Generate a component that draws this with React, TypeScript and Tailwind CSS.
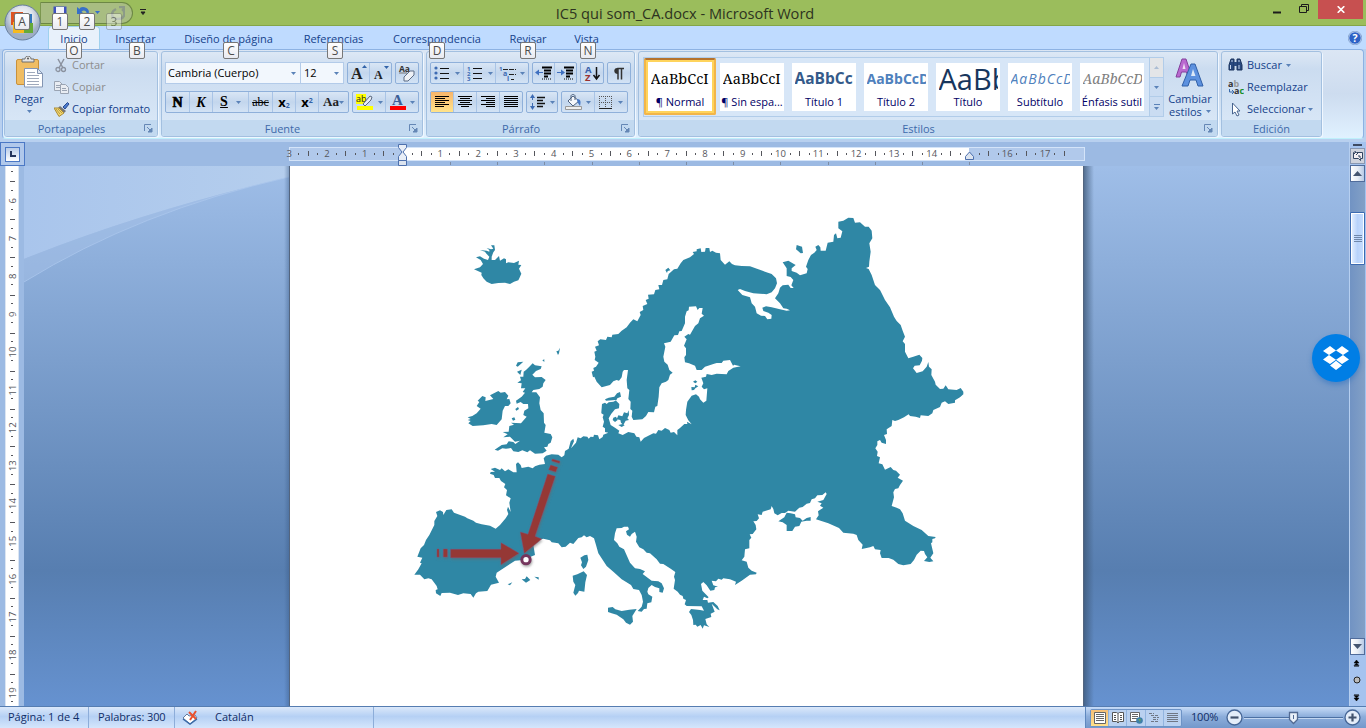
import type { ReactNode } from "react";

const Svg = ({ w, h, children, className = "" }: { w: number; h: number; children: ReactNode; className?: string }) => (
  <svg width={w} height={h} viewBox={`0 0 ${w} ${h}`} className={`block shrink-0 ${className}`}>{children}</svg>
);

const Caret = ({ className = "" }: { className?: string }) => (
  <Svg w={5} h={3} className={className}><path d="M0 0h5L2.5 3z" fill="#5a82b8" /></Svg>
);

const Launcher = () => (
  <Svg w={9} h={9}>
    <path d="M.5 7V.5H7" stroke="#6587b5" fill="none" />
    <path d="M3 3l3 3M8 4v4H4z" stroke="#6587b5" fill="#6587b5" />
  </Svg>
);

const KeyTip = ({ children, className }: { children: ReactNode; className: string }) => (
  <span className={`absolute z-20 flex h-[17px] w-4 items-center justify-center rounded-[2px] border border-[#777] bg-linear-to-b from-white to-[#e9eaf0] text-[12px] leading-none text-[#4c4c4c] ${className}`}>
    {children}
  </span>
);

const Group = ({ label, width, launcher, children }: { label: string; width: string; launcher?: boolean; children: ReactNode }) => (
  <section className={`flex h-[86px] shrink-0 flex-col overflow-hidden rounded-[3px] border border-[#a3c0e0] bg-linear-to-b from-[#dde8f5] via-[#cbdcf0] via-20% to-[#dbe9f8] shadow-[1px_1px_0_#f0f7ff] ${width}`}>
    <div className="flex h-[68px] shrink-0">{children}</div>
    <div className="flex h-4 items-center bg-[#c2d9f0] pr-1 text-[11px] text-[#3e6aaa]">
      <span className={`flex-1 text-center leading-none ${launcher ? "pr-[6px]" : "pl-1"}`}>{label}</span>
      {launcher && <Launcher />}
    </div>
  </section>
);

const Bar = ({ width, children }: { width: string; children: ReactNode }) => (
  <div className={`flex h-[22px] shrink-0 divide-x divide-[#a9c4e6] rounded-[2px] border border-[#8fb0da] bg-linear-to-b from-[#d9e6f5] via-[#c3d6ed] via-50% to-[#d3e3f5] ${width}`}>
    {children}
  </div>
);

const Cell = ({ children, className = "flex-1" }: { children: ReactNode; className?: string }) => (
  <div className={`flex h-full items-center justify-center gap-1 ${className}`}>{children}</div>
);

const TextLines = ({ rows }: { rows: number[][] }) => (
  <Svg w={14} h={12}>
    {rows.map(([x, w], i) => <rect key={i} x={x} y={i * 2} width={w} height={1} fill="#000" />)}
  </Svg>
);

const ListIcon = ({ kind }: { kind: "bullet" | "number" | "level" }) => (
  <Svg w={17} h={15}>
    {kind === "bullet" && [2, 7, 12].map((y) => <g key={y}><circle cx="2" cy={y} r="1.6" fill="#3d6bb3" /><path d={`M6 ${y + 0.5}h9`} stroke="#111" /></g>)}
    {kind === "number" && [2, 7, 12].map((y, i) => <g key={y}><text x="0" y={y + 2.5} fontSize="6" fontWeight="bold" fill="#3d6bb3">{i + 1}</text><path d={`M6 ${y + 0.5}h9`} stroke="#111" /></g>)}
    {kind === "level" && <><text x="0" y="5" fontSize="6" fontWeight="bold" fill="#3d6bb3">1</text><text x="4" y="10" fontSize="7" fontWeight="bold" fill="#3d6bb3">a</text><text x="8" y="15" fontSize="7" fontWeight="bold" fill="#3d6bb3">i</text><path d="M4 3.500h13M10 8.500h7M12 13.500h3" stroke="#222" strokeDasharray="5 1" /></>}
  </Svg>
);

const IndentIcon = ({ flip }: { flip?: boolean }) => (
  <Svg w={17} h={14}>
    <path d="M7 1.500h10M9 4.500h7M9 7.500h7M9 10.500h4" stroke="#000" strokeWidth="1.800" />
    <path d="M7 13h9" stroke="#000" strokeDasharray="1 1" />
    <path d={flip ? "M0 6h4V3.5L8 6.5 4 9.5V7H0z" : "M8 6H4V3.5L0 6.5 4 9.5V7h4z"} fill="#3e6fc0" />
  </Svg>
);

const PasteIcon = () => (
  <Svg w={28} h={32}>
    <rect x="1.5" y="3.5" width="22" height="25" rx="1.5" fill="#f0bd63" stroke="#c9913b" />
    <path d="M7 6V3h3c0-4 6-4 6 0h3v3z" fill="#e4e4e4" stroke="#6f6f6f" />
    <circle cx="13" cy="2.5" r="1" fill="#555" />
    <path d="M9.500 12.500h13l5 5v13.500h-18z" fill="#fff" stroke="#8395b3" />
    <path d="M22.500 12.500v5h5z" fill="#dfe7f3" stroke="#8395b3" />
    <path d="M12 16.500h8M12 19.500h12M12 22.500h12M12 25.500h12M12 28.500h12" stroke="#9fa9bb" />
  </Svg>
);

const CutIcon = () => (
  <Svg w={15} h={15}>
    <path d="M4 1l5 9M10 1L5 10" stroke="#8b929f" strokeWidth="1.5" fill="none" />
    <circle cx="4" cy="11.500" r="2" fill="none" stroke="#8b929f" strokeWidth="1.300" /><circle cx="9.500" cy="11.500" r="2" fill="none" stroke="#8b929f" strokeWidth="1.300" />
  </Svg>
);
const CopyIcon = () => (
  <Svg w={15} h={13}>
    <path d="M.5.5h5l3 3v6h-8z" fill="#e9edf3" stroke="#9aa4b3" /><path d="M2 4.500h4M2 6.500h4" stroke="#9aa4b3" />
    <path d="M6.500 3.500h5l3 3v6h-8z" fill="#e9edf3" stroke="#9aa4b3" /><path d="M8 7.500h4M8 9.500h5" stroke="#9aa4b3" />
  </Svg>
);
const BrushIcon = () => (
  <Svg w={16} h={15}>
    <path d="M9 5l4.500-4.500L15 2l-4 5z" fill="#4b7cd0" stroke="#294b90" />
    <path d="M6 4l6 5-2 2-6-5z" fill="#777" />
    <path d="M0 6l5 0 5 5-5 3.500z" fill="#f3d66c" stroke="#a98a35" />
    <path d="M2 7l4 5M4 7l4 4" stroke="#b79b45" />
  </Svg>
);

const seg = (dx: number, dy: number, points: string) =>
  points.trim().split(/\s+/).map((p) => {
    const [x, y] = p.split(",").map(Number);
    return `${x + dx},${y + dy}`;
  }).join(" ");

const mainland = [
  seg(0, 0, "605,562 590,545 583,530 579,532 575,515 582,512 580,504 588,500 596,488 584,480 586,470 583,455 590,452 585,440 597,436 593,424 601,418 618,420 622,410 635,412 637,404 655,402 665,392 680,382 690,368 700,358 712,364 722,345 719,336 730,330 728,318 742,312 737,300 746,296 744,284 762,283 766,270 778,268 775,255 786,255 790,240 802,238 806,222 822,208 832,206 842,190 850,180 870,172 882,162 878,156 890,154"),
  seg(840, 0, "50,148 62,145 64,156 75,155 77,144 88,144 90,156 97,152 108,158 120,160 122,180 135,194 148,184 156,192 165,196 185,198 210,199 235,208 255,215 275,222 288,235 291,250 285,265 275,277 260,283 240,281 220,280 195,273 180,267 173,270 187,285 210,292 215,310 225,320 230,340 243,347 255,348 262,358 274,356 275,345 265,338 250,333 247,323 258,319 275,322 300,328 320,332 330,331 320,326 310,325 300,310 285,295 295,280 300,263 308,256 325,254 332,264 341,264 334,256 340,240 332,231 320,228 320,205 308,187 325,182 347,195 335,205 335,213 350,218 360,226 380,220 383,207 378,200 385,180 393,165 403,158 410,150 406,140 415,135 421,142 422,152 437,152 443,128 460,125 462,105 468,100 472,115 482,113 487,94 475,85 475,65 490,62 505,53 520,54 525,68 540,67 555,80 566,80 575,92 577,115 568,130 572,155 568,185 567,200 558,204 566,207 575,225 585,255 600,270 605,280 615,300 630,322 642,350 650,363 662,375 668,392 675,410 668,424 675,432 675,455 685,475 700,470 718,464 727,474 726,482 719,496 704,497 699,505 710,519 728,514 740,500 745,486 747,500 755,508 754,525 765,545 767,554 780,567 790,566 797,556 805,568 830,570 842,564 850,575 850,583 840,592 825,601 825,608 805,612 795,604 785,608 780,621 760,630 757,640 745,648 722,646 720,654 707,650 690,648 686,643 672,652 655,660"),
  seg(840, 630, "645,33 637,30 635,48 620,58 621,72 612,75 618,90 618,102 605,98 600,90 592,94 592,105 586,115 593,125 591,138 600,142 596,160 607,163 615,179 632,171 640,180 648,182 660,194 653,203 669,212 660,225 655,235 645,237 640,247 642,262 635,288 650,293 660,298 668,310 675,332 700,348 725,360 745,378 767,381 765,385 757,387 757,397 753,400 760,430 751,443 760,454 748,456 732,453 742,442 735,432 732,423 722,422 710,434 702,450 692,462 670,466 655,462 640,449 626,444 605,444 600,430 602,420 585,418 580,408 570,412 545,417 548,404 535,390 530,375 520,371 490,368 477,354 445,340 408,328 416,316 414,304 430,293 420,287 425,280 412,275 430,270 440,252 437,247 427,255 412,256 405,265 395,268 390,279 380,281 368,291 358,293 345,305 325,302 315,309 305,309 293,316 283,310 280,297 275,288 272,298 248,305 245,315 233,313 237,325 230,333 220,334 227,345 229,358 218,372 209,373 214,383 208,390 208,415 195,418 193,440 185,451 200,455 205,473 215,482 230,488 228,493 210,494 185,512 165,525 168,515 150,508 130,505 125,509 115,506 108,514 95,512 100,526 114,530 105,532 103,540 91,542 80,526 70,516 63,522 67,542 86,562 82,565 72,560 68,570 82,570 84,578 100,576 113,588 119,601 112,598 95,581 104,605 92,611 94,621 76,627 80,643 88,651 72,646 68,656 62,645 52,650 47,644 40,645 39,630 34,615 27,606 33,597 60,600 72,602 65,589 20,588 14,583 18,570 10,566 8,558 0,554"),
  seg(0, 630, "833,545 821,536 825,510 822,500 826,486 812,476 790,462 780,461 770,448 750,430 740,428 730,418 718,412 708,395 710,380 705,365 695,372 690,380 681,374 678,364 687,358 684,350 672,350 665,354 650,355 645,370 642,390 652,400 658,410 672,418 682,440 690,458 705,475 720,477 735,484 728,492 755,512 775,514 785,520 792,535 788,548 778,546 778,535 765,531 755,525 745,534 742,545 745,553 757,560 754,577 742,580 740,596 732,597 725,605 713,603 725,590 729,575 725,555 717,540 700,537 693,525 665,508 640,485 620,468 595,430 588,405 582,385 570,378 560,382 552,376 545,382 535,384 520,402 510,398 497,410 485,412 475,400 455,397 450,391 430,386 412,391 400,405 405,435 385,443 370,450 345,452 290,488 287,500 297,518 273,524 262,543 235,545 228,550 220,563 212,552 190,550 174,555 150,548 125,549 121,558 108,550 107,540 113,538 110,528 95,508 85,505 73,508 60,494 43,494 55,478 65,460 60,458 67,443 52,440 62,415 72,405 78,390 88,375 103,345 103,333 112,318 108,306 120,301 129,306 130,315 139,300 155,298 162,308 195,320 202,325 220,332 228,338 245,343 270,347 287,356 300,345 317,325 325,312 321,300 324,290 332,306 328,278 332,265 318,256 321,240 312,232 316,222 303,213 298,204 285,204 281,195 270,191 272,186 285,185 272,177 285,173 300,180 305,175 315,184 325,178 340,187 350,187 348,162 354,157 362,165 365,174 385,170 398,175 405,169 418,164 435,162 431,145 438,137 455,133 475,134 485,142 493,136 495,123 506,116 512,94 520,86 522,94 513,115 528,98 533,82 542,85 550,79 562,80 566,86 572,80 580,81 582,74 594,76 598,88 608,81 610,74 625,68 615,66 615,55 608,50 612,35 608,22 611,14 604,10"),
  seg(0, 0, "604,637 606,612 615,608 620,612 626,607 640,605 649,601 652,595 663,590 660,576 651,580 643,590 626,593 615,598 618,602 646,600 658,612 657,625 645,628 634,641 626,655"),
  seg(0, 630, "632,45 645,53 658,62 655,70 668,75 685,66 703,70 709,80 718,82 722,95 732,84 760,70 768,71 775,60 785,62 795,54 808,60 812,68 822,66 832,76 832,60 840,54 853,42 862,42 861,35 875,43 865,31 857,15"),
  seg(840, 0, "18,630 22,605 35,587 48,583 57,590 60,598 70,608 79,602 82,565 72,568 65,560 70,550 64,533 78,530 80,522 95,525 110,521 140,523 145,513 160,503 182,499 168,496 163,494 159,497 150,480 130,482 125,489 110,489 100,492 75,500 65,510 50,510 45,497 27,490 15,487 13,472 18,465 18,445 12,437 20,418 13,410 25,402 30,404 45,378 55,370 60,355 72,347 65,341 68,324 58,324 53,330 48,319 27,320 26,331 20,334 15,350 15,370"),
  seg(0, 0, "845,393 838,394 834,405 823,406 812,425 792,430 796,440 790,470 793,485 803,494 808,510 818,518 810,524 805,540 798,545 785,550 778,562 776,590 772,618 766,620 762,637 745,636 738,648 727,658 700,660 695,650 697,632 691,627 692,605 685,597 688,570 682,565 680,540 684,510 672,510 668,515 665,532 657,542 650,540 640,544 630,555"),
].join(" ");

const islands = [
  seg(0, 0, "222,208 240,202 249,192 242,180 228,172 240,169 252,176 264,180 268,170 258,160 255,155 240,150 260,152 268,155 268,150 260,144 273,148 280,146 273,136 283,136 285,150 280,157 275,170 275,180 285,180 297,168 300,182 312,175 318,178 318,190 325,187 342,189 357,182 355,194 364,195 357,206 364,221 358,235 355,241 342,245 330,252 315,248 295,249 275,252 260,245 250,235 244,225 245,218"),
  seg(0, 0, "398,490 405,496 425,499 422,507 408,513 397,524 405,532 425,531 437,540 430,550 428,560 418,567 400,570 395,577 409,577 420,592 418,610 422,630 431,640 432,668 437,675 433,698 452,702 457,712 452,728 445,732 442,740 432,742 440,752 428,760 405,761 390,751 382,757 367,751 355,756 340,754 333,744 318,746 307,745 294,752 284,749 305,735 320,733 326,724 340,726 346,732 360,722 345,725 330,710 310,712 323,703 308,696 326,695 328,678 342,674 333,668 363,670 380,650 370,645 373,632 385,625 384,612 370,612 362,606 350,611 348,602 365,590 375,578 368,576 376,565 363,565 365,550 352,548 363,541 360,530 370,530 371,515 378,510 388,500"),
  seg(0, 0, "203,652 217,648 230,640 242,626 230,618 238,606 233,602 247,588 257,592 256,603 280,597 270,586 295,573 302,578 315,576 325,587 320,598 328,597 332,610 325,618 315,618 308,632 305,658 290,675 275,672 250,676 218,678 205,670 212,663 203,660 212,657"),
  seg(0, 0, "348,497 353,487 370,485 360,494 353,500"), seg(0, 0, "351,515 365,509 361,525"), seg(0, 0, "427,481 433,478 433,486"),
  seg(0, 0, "469,454 475,452 480,443 477,460 474,465"), seg(0, 0, "346,627 354,621 357,627 349,632"), seg(0, 0, "335,655 343,652 346,659 339,662"),
  seg(0, 0, "655,646 667,649 672,637 682,640 686,631 687,645 682,655 687,660 677,662 670,675 663,668 661,660 650,658"),
  seg(0, 0, "640,653 648,650 653,660 645,666 638,660"), seg(0, 0, "655,675 668,672 674,676 665,681"), seg(0, 0, "796,210 805,203 811,211 803,213 801,219"),
  seg(840, 0, "348,148 350,135 366,140 369,159 362,160"), seg(840, 0, "39,545 46,541 52,545 46,550"), seg(840, 0, "34,561 44,562 46,554 55,559 46,565 42,570 35,571"),
  seg(840, 630, "295,334 313,322 320,308 332,310 345,313 347,322 360,324 368,332 380,324 392,321 392,332 380,332 364,335 358,348 345,350 337,363 320,363 320,345 308,337"),
  seg(0, 630, "541,443 553,436 562,434 565,450 558,470 550,477 543,466 546,457"),
  seg(0, 630, "518,497 532,493 551,484 561,495 556,517 553,545 537,542 534,549 526,557 520,548 526,525 520,515"),
  seg(0, 630, "624,593 638,591 646,598 665,603 688,599 710,597 697,618 699,635 690,644 678,638 670,628 650,614 635,610 624,606"),
  seg(0, 630, "323,523 337,517 330,526"), seg(0, 630, "365,508 375,507 380,499 391,510 378,518"), seg(0, 630, "403,500 416,502 416,509"),
];

const EuropeMap = () => (
  <svg width="570" height="440" viewBox="0 0 1710 1320" className="block">
    <defs><filter id="soft" x="-10%" y="-10%" width="130%" height="130%"><feDropShadow dx="2" dy="5" stdDeviation="3" floodColor="#666" floodOpacity=".55" /></filter></defs>
    <g fill="#2f87a5"><polygon points={mainland} />{islands.map((p) => <polygon key={p} points={p} />)}</g>
    <g transform="translate(0 630)" fill="#953735" stroke="#8b4a72" strokeWidth="1.500" filter="url(#soft)">
      <path d="M111 417h6v24h-6zM130 417h12v24h-12zM152 418h151v-20l54 32-54 34v-21H152z" />
      <path d="M457 147l23 7-2 6-23-7zM452 165l21 7-6 14-21-7zM443 192l23 7-61 180 20 8-52 43-12-64 23 7z" />
      <circle cx="378" cy="449" r="12.500" fill="#fff" stroke="#74365d" strokeWidth="9" />
    </g>
  </svg>
);

const HRuler = () => (
  <svg width="810" height="24" viewBox="280 0 810 24" className="block" fontSize="9.500" fill="#55565c" textAnchor="middle">
    <rect x="289.500" y="5.500" width="795" height="13" fill="#b1c9eb" stroke="#d4e4f9" />
    <rect x="402" y="6" width="567" height="12" fill="#fff" />
    {Array.from({ length: 21 }, (_, i) => i - 3).map((k) => {
      const x = 402.5 + k * 37.8;
      return <g key={k}>
        {k !== 0 && k !== 15 && <text x={x} y="15">{Math.abs(k)}</text>}
        <path d={`M${Math.round(x + 18.5) + 0.5} 9v5`} stroke="#55565c" />
        <path d={`M${Math.round(x + 9) + 0.5} 11v2${k < 17 ? `M${Math.round(x + 28) + 0.5} 11v2` : ""}`} stroke="#55565c" />
      </g>;
    })}
    {Array.from({ length: 12 }, (_, i) => <path key={i} d={`M${Math.round(450 + i * 47.2) + 0.5} 20v3`} stroke="#7d8da5" />)}
    <path d="M398.500 2.500h8v3l-3.500 4.500 3.500 4.500v4h-8v-4l3.500-4.500-3.500-4.500z" fill="#e8eef7" stroke="#4d70ad" />
    <path d="M398.500 18.500h8v5h-8z" fill="#dce4ef" stroke="#4d70ad" />
    <path d="M965.500 17.500v-3l4-4.500 4 4.500v3z" fill="#dce4ef" stroke="#4d70ad" />
  </svg>
);

const VRuler = () => (
  <svg width="24" height="540" viewBox="0 166 24 540" className="block shrink-0" fontSize="9.500" fill="#55565c" textAnchor="middle">
    <rect x="0" y="166" width="24" height="540" fill="#9cbae3" /><rect x="5.500" y="165" width="13" height="542" fill="#fff" stroke="#dbe5f2" />
    {Array.from({ length: 15 }, (_, i) => i + 5).map((k) => {
      const y = 200.7 + (k - 6) * 37.85;
      return <g key={k}>
        {k > 5 && <text transform={`translate(16 ${y}) rotate(-90)`}>{k}</text>}
        <path d={`M11 ${Math.round(y + 9) - 0.5}h2M10 ${Math.round(y + 18.6) + 0.5}h5M11 ${Math.round(y + 28) - 0.5}h2`} stroke="#55565c" />
      </g>;
    })}
  </svg>
);

const styles = [
  { name: "¶ Normal", sample: "AaBbCcI", cls: "font-['Noto_Serif','Liberation_Serif',serif] text-[14.500px] text-black", on: true },
  { name: "¶ Sin espa...", sample: "AaBbCcI", cls: "font-['Noto_Serif','Liberation_Serif',serif] text-[14.500px] text-black" },
  { name: "Título 1", sample: "AaBbCc", cls: "font-bold text-[15.500px] text-[#345a8a]" },
  { name: "Título 2", sample: "AaBbCcD", cls: "font-bold text-[14px] text-[#4f81bd]" },
  { name: "Título", sample: "AaBb", cls: "text-[29px] text-[#17365d]" },
  { name: "Subtítulo", sample: "AaBbCcD", cls: "italic text-[14px] text-[#4f81bd] tracking-[1px]" },
  { name: "Énfasis sutil", sample: "AaBbCcD", cls: "font-['Noto_Serif','Liberation_Serif',serif] italic text-[14px] text-[#808080]" },
];

const tabs: [string, string][] = [
  ["Insertar", "w-[61px]"], ["Diseño de página", "w-[125px]"], ["Referencias", "ml-px w-[83px]"],
  ["Correspondencia", "w-[124px]"], ["Revisar", "w-[58px]"], ["Vista", "w-[59px]"],
];

const TitleBar = () => (
  <header className="flex h-[26px] shrink-0 border-b border-[#84a548] bg-[#9bbd5c]">
    <div className="flex h-6 w-[160px] items-start pl-10 pt-0.5">
      <div className="flex h-[22px] w-[93px] items-center gap-2.5 rounded-r-full border border-[#6c8745] border-l-[#7b974f] bg-[#a8bd82] pl-3">
        <Svg w={14} h={14}><path d="M.5.5h13v13h-13z" fill="#3e50bf" /><path d="M3 1h8v6H3z" fill="#f2f3fb" /><path d="M4 9h6v4H4z" fill="#ddd" /></Svg>
        <Svg w={24} h={14}><path d="M0 1v7h7L4.500 5.500c2-2 5-1 5 1.500s-2 4-3 5c6-1 7-8 3-10S3 1.500 2.500 3z" fill="#3770c8" /><path d="M18 5h5l-2.500 3z" fill="#3770c8" /></Svg>
        <Svg w={14} h={14}><path d="M5 3c-6 3-5 10 2 10s8-7 4-10M8 1h5v5" fill="none" stroke="#8c9a88" strokeWidth="2.500" /></Svg>
      </div>
      <Svg w={6} h={7} className="ml-[7px] mt-[7px]"><path d="M0 .5h6M1 3h4L3 5.500z" stroke="#222" strokeWidth="1" fill="#222" /></Svg>
    </div>
    <h1 className="flex-1 pl-px pt-[3px] text-center text-[14.600px] leading-5 text-[#2d3320]">IC5 qui som_CA.docx - Microsoft Word</h1>
    <div className="flex w-[157px] justify-end">
      <Svg w={9} h={14} className="mr-[17px]"><path d="M1 12.500h8" stroke="#1c1c1c" strokeWidth="2" /></Svg>
      <Svg w={12} h={16} className="mr-2"><path d="M1.500 6.500h7v6h-7zM3.500 6V4.500h7v6H9" fill="none" stroke="#1c1c1c" /></Svg>
      <div className="flex h-[19px] w-[45px] items-center justify-center bg-[#c75050]"><Svg w={8} h={7}><path d="M.7.2l6.600 6.600M7.300.2L.7 6.800" stroke="#fff" strokeWidth="1.600" /></Svg></div>
      <div className="w-[3px]" />
    </div>
  </header>
);

const Ribbon = () => (
  <div className="flex h-[90px] gap-[3px] rounded-[4px] border border-[#8db2e3] border-b-[#bff0fb] bg-linear-to-b from-[#dbe6f4] via-[#cddcef] via-50% to-[#e0f1ff] pl-px pt-px">
    <Group label="Portapapeles" width="w-[154px]" launcher>
      <div className="flex w-[48px] flex-col items-center pt-1 text-[11px] text-[#15428b]">
        <PasteIcon /><span className="mt-[5px] leading-none">Pegar</span><Caret className="mt-1.5" />
      </div>
      <div className="flex flex-col pl-px pt-0.5 text-[11px] text-[#15428b]">
        <div className="flex h-[22px] items-center gap-[3px] text-[#8d8d8d]"><CutIcon />Cortar</div>
        <div className="flex h-[22px] items-center gap-[3px] text-[#8d8d8d]"><CopyIcon />Copiar</div>
        <div className="flex h-[22px] items-center gap-0.5 whitespace-nowrap"><BrushIcon />Copiar formato</div>
      </div>
    </Group>
    <Group label="Fuente" width="w-[262px]" launcher>
      <div className="flex flex-col gap-[7px] pl-[3px] pt-[10px]">
        <div className="flex h-[22px]">
          <div className="flex w-[136px] items-center justify-between border border-[#b3cbe9] bg-[#f2f7fd] pl-0.5 pr-1 text-[11px] text-black">Cambria (Cuerpo)<Caret /></div>
          <div className="flex w-[43px] items-center justify-between border border-l-0 border-[#b3cbe9] bg-[#f2f7fd] pl-[3px] pr-1 text-[11px] text-black">12<Caret /></div>
          <div className="w-[3px]" />
          <Bar width="w-[45px]">
            <Cell><Svg w={16} h={18}><text x="0" y="15" fontSize="16" fontWeight="bold" fontFamily="Liberation Serif, serif" fill="#222">A</text><path d="M11 4l2.500-3L16 4z" fill="#3263a8" /></Svg></Cell>
            <Cell><Svg w={16} h={18}><text x="1" y="15" fontSize="12" fontWeight="bold" fontFamily="Liberation Serif, serif" fill="#222">A</text><path d="M11 2h5l-2.500 3z" fill="#3263a8" /></Svg></Cell>
          </Bar>
          <div className="w-[3px]" />
          <Bar width="w-[24px]"><Cell><Svg w={18} h={18}><text x="1" y="8" fontSize="8.500" fontWeight="bold" fill="#333">Aa</text><path d="M1 9h8" stroke="#777" /><path d="M6 13l6-6h4v4l-6 6H6z" fill="#eef1f6" stroke="#5d6c85" /></Svg></Cell></Bar>
        </div>
        <div className="flex h-[22px] gap-[3px]">
          <Bar width="w-[184px]">
            <Cell className="w-[24px]"><b className="font-['Liberation_Serif',serif] text-[14px] font-black text-black [-webkit-text-stroke:0.7px_black]">N</b></Cell>
            <Cell className="w-[23px]"><b className="font-['Liberation_Serif',serif] text-[14px] italic text-black">K</b></Cell>
            <Cell className="w-[36px]"><b className="font-['Liberation_Serif',serif] text-[14px] leading-none text-black underline">S</b><Caret className="ml-1" /></Cell>
            <Cell className="w-[24px]"><b className="font-['Liberation_Serif',serif] text-[12px] font-normal text-black line-through">abc</b></Cell>
            <Cell className="w-[23px]"><span className="text-[13px] font-bold leading-none text-black">x<sub className="text-[7px] text-[#3263a8]">2</sub></span></Cell>
            <Cell className="w-[23px]"><span className="text-[13px] font-bold leading-none text-black">x<sup className="text-[7px] text-[#3263a8]">2</sup></span></Cell>
            <Cell className="w-[29px]"><b className="-mr-1 font-['Liberation_Serif',serif] text-[13px] text-[#222]">Aa</b><Caret /></Cell>
          </Bar>
          <Bar width="w-[67px]">
            <Cell><Svg w={18} h={18}><rect x="0" y="1" width="10" height="10" fill="#ff0" /><text x="0" y="9" fontSize="9" fill="#222">ab</text><path d="M7 11l7-8 2 1-1 3-6 6z" fill="#e8ecf4" stroke="#5c6a7f" /><rect x="1" y="13" width="16" height="4" fill="#ff0" /></Svg><Caret /></Cell>
            <Cell><Svg w={17} h={18}><text x="3" y="12" fontSize="15" fontWeight="bold" fontFamily="Liberation Serif, serif" fill="#3b5e96">A</text><rect x="1" y="13" width="16" height="4" fill="#f00" /></Svg><Caret /></Cell>
          </Bar>
        </div>
      </div>
    </Group>
    <Group label="Párrafo" width="w-[209px]" launcher>
      <div className="flex flex-col gap-[7px] pl-[3px] pt-[10px]">
        <div className="flex h-[22px] gap-[3px]">
          <Bar width="w-[99px]">
            {(["bullet", "number", "level"] as const).map((k) => <Cell key={k}><ListIcon kind={k} /><Caret /></Cell>)}
          </Bar>
          <Bar width="w-[45px]"><Cell><IndentIcon /></Cell><Cell><IndentIcon flip /></Cell></Bar>
          <Bar width="w-[24px]"><Cell><Svg w={17} h={18}><text x="1" y="8.500" fontSize="9.500" fontWeight="bold" fill="#3a5fa8">A</text><text x="1" y="17" fontSize="9.500" fontWeight="bold" fill="#9b3131">Z</text><path d="M12.500 3v11M9.500 11l3 4 3-4" stroke="#111" strokeWidth="1.500" fill="none" /></Svg></Cell></Bar>
          <Bar width="w-[24px]"><Cell><Svg w={12} h={13}><path d="M5 12.500V1.500h6M8.500 12.500V1.500" stroke="#333" strokeWidth="1.500" fill="none" /><path d="M5 1C0 0 0 7 5 7z" fill="#333" /></Svg></Cell></Bar>
        </div>
        <div className="flex h-[22px] gap-[3px]">
          <Bar width="w-[93px]">
            <Cell className="flex-1 bg-linear-to-b from-[#f7b56b] to-[#ffe38a]"><TextLines rows={[[0, 14], [0, 10], [0, 14], [0, 10], [0, 14], [0, 9]]} /></Cell>
            <Cell><TextLines rows={[[0, 14], [2, 10], [0, 14], [2, 10], [0, 14], [3, 8]]} /></Cell>
            <Cell><TextLines rows={[[0, 14], [5, 9], [0, 14], [5, 9], [0, 14], [5, 9]]} /></Cell>
            <Cell><TextLines rows={[[0, 14], [0, 14], [0, 14], [0, 14], [0, 14], [0, 14]]} /></Cell>
          </Bar>
          <Bar width="w-[32px]"><Cell><Svg w={16} h={16}><path d="M2.500 2v12" stroke="#3d6bb3" strokeDasharray="4 3" /><path d="M0 4l2.500-4L5 4zM0 12l2.500 4L5 12z" fill="#3d6bb3" /><path d="M7 3.500h8M7 6.500h6M7 9.500h8M7 12.500h6" stroke="#111" strokeWidth="1.300" /></Svg><Caret /></Cell></Bar>
          <Bar width="w-[67px]">
            <Cell><Svg w={17} h={16}><path d="M3 7l5-5 6 5-6 5z" fill="#f5f7fa" stroke="#4f627f" /><path d="M6 7V2c0-2 4-2 4 0v4" fill="none" stroke="#4f627f" /><path d="M12 5c4 0 4 3 3 7-2-3-3-4-3-7z" fill="#4577c5" /><path d="M.5 12.500h16v3H.5z" fill="#eee" stroke="#999" /></Svg><Caret /></Cell>
            <Cell><Svg w={13} h={13}><path d="M.5 0v12M6.500 0v12M12.500 0v12M0 .5h12M0 6.500h12" stroke="#555" strokeDasharray="1 1" /><path d="M0 12.500h13" stroke="#222" /></Svg><Caret className="ml-0.5" /></Cell>
          </Bar>
        </div>
      </div>
    </Group>
    <Group label="Estilos" width="w-[580px]" launcher>
      <div className="ml-1 mt-[5px] flex h-[60px] w-[521px] border border-[#b1cce9] bg-[#d7e6f7]">
        {styles.map((s) => (
          <div key={s.name} className={s.on ? "flex h-[57px] w-[72px] shrink-0 rounded-[2px] border-2 border-[#f2b54a] border-t-[#b5722d] bg-[#ffd45c] p-[2px]" : "w-[72px] shrink-0 px-1 py-[5px]"}>
            <div className="flex h-full min-h-[48px] w-[64px] flex-col items-center overflow-hidden bg-white">
              <div className={`flex w-[59px] shrink-0 items-center overflow-hidden whitespace-nowrap leading-none ${s.on ? "h-[32px]" : "h-[31px]"} ${s.cls}`}>{s.sample}</div>
              <div className="mt-px whitespace-nowrap text-[11px] leading-[13px] text-[#000066]">{s.name}</div>
            </div>
          </div>
        ))}
        <div className="ml-auto flex w-[14px] flex-col divide-y divide-[#b1cce9] border-l border-[#b1cce9] bg-[#cadcf2]">
          <div className="flex flex-1 items-center justify-center bg-[#e3e5e8]"><Caret className="rotate-180 opacity-40" /></div>
          <div className="flex flex-1 items-center justify-center"><Caret /></div>
          <div className="flex flex-1 flex-col items-center justify-center gap-0.5"><div className="h-px w-1.5 bg-[#5a82b8]" /><Caret /></div>
        </div>
      </div>
      <div className="flex w-[52px] flex-col items-center pt-1.5 text-[11px] leading-[13px] text-[#15428b]">
        <Svg w={32} h={30}>
          <path d="M2 19L8 1h4l6 18h-4l-1.500-5h-5L6 19z" fill="#b968cf" stroke="#84409c" /><path d="M8.500 11L10 5l1.500 6z" fill="#edddf2" />
          <path d="M8 28L17 6h4l8 22h-5l-2-6h-6l-2 6z" fill="#5d91df" stroke="#3160a8" /><path d="M17 18l2-7 2.500 7z" fill="#dce8f7" />
        </Svg>
        <span className="mt-1">Cambiar</span><span className="flex items-center gap-1">estilos<Caret /></span>
      </div>
    </Group>
    <Group label="Edición" width="w-[101px]">
      <div className="flex flex-col pl-1.5 pt-0.5 text-[11px] text-[#15428b]">
        <div className="flex h-[22px] items-center gap-1"><Svg w={15} h={14}><path d="M1 12V7l2-6h3v11zM9 12V1h3l2 6v5z" fill="#29497f" stroke="#1c355f" /><path d="M6 4h3v4H6z" fill="#29497f" /><path d="M2.500 7v4M11 7v4M4 2v2M11 2v2" stroke="#c7d6ed" /></Svg>Buscar<Caret /></div>
        <div className="flex h-[22px] items-center gap-[3px]"><Svg w={16} h={16}><text x="0" y="8" fontSize="9" fontWeight="bold" fill="#333">a<tspan fill="#999">b</tspan></text><text x="6" y="15" fontSize="9" fontWeight="bold" fill="#333">a<tspan fill="#168f28">c</tspan></text><path d="M1.500 10v3h4M4 11l2 2-2 2" stroke="#3a6aa9" fill="none" /></Svg>Reemplazar</div>
        <div className="flex h-[22px] items-center gap-1"><Svg w={15} h={15}><path d="M4.500 1v11l2.500-2 2 4 2-1-2-4h3z" fill="#fff" stroke="#48648f" /></Svg>Seleccionar<Caret className="-ml-px" /></div>
      </div>
    </Group>
  </div>
);

const ScrollButton = ({ down }: { down?: boolean }) => (
  <div className="flex h-[17px] w-[15px] shrink-0 items-center justify-center border border-[#506c9b] bg-linear-to-r from-white via-[#e8edf5] to-[#b8cae6]">
    <Svg w={9} h={5} className={down ? "rotate-180" : ""}><path d="M0 5l4.500-5L9 5z" fill="#44546f" /></Svg>
  </div>
);

const Zoomer = ({ plus }: { plus?: boolean }) => (
  <Svg w={17} h={17}><circle cx="8.500" cy="8.500" r="7.500" fill="#e4edf9" stroke="#466696" strokeWidth="1.300" /><path d={plus ? "M4.500 8.500h8M8.500 4.500v8" : "M4.500 8.500h8"} stroke="#43536d" strokeWidth="2.200" /></Svg>
);

const StatusBar = () => (
  <footer className="flex h-[22px] border-t border-[#567db1] bg-linear-to-b from-[#dbe8fa] via-[#b5d0f4] via-45% to-[#d5e6fc] text-[11px] text-[#102d66]">
    <div className="flex w-[89px] items-center border-r border-[#8dadd9] pl-2">Página: 1 de 4</div>
    <div className="flex w-[86px] items-center border-r border-[#8dadd9] pl-[9px] tracking-[-0.1px]">Palabras: 300</div>
    <div className="flex w-[199px] items-center gap-[17px] border-r border-[#8dadd9] pl-[7px]">
      <Svg w={16} h={15}><path d="M1 8l4-4 2 2 6-1 2 3-7 6z" fill="#fff" stroke="#657c9e" /><path d="M1 9l7 5 7-5" stroke="#3b6ba8" fill="none" strokeWidth="1.500" /><path d="M7 2l7 7M14 1L8 10" stroke="#e9502d" strokeWidth="2" /></Svg>Catalán
    </div>
    <div className="flex-1" />
    <div className="flex w-[281px] shrink-0 items-center border-l border-[#5f88be] bg-linear-to-b from-[#c7dcf8] via-[#8daedb] via-45% to-[#7398cb] pl-1">
      <div className="flex h-[18px] w-[92px] shrink-0 divide-x divide-[#92b4df] rounded-[2px] border border-[#6d93c6] bg-[#bad1f0]">
        <Cell className="flex-1 bg-linear-to-b from-[#f6c078] to-[#ffe08a]"><Svg w={12} h={12}><path d="M.5.5h11v11H.5z" fill="#fff" stroke="#666" /><path d="M2 2.500h8M2 4.500h8M2 6.500h8M2 8.500h8" stroke="#666" /></Svg></Cell>
        <Cell><Svg w={12} h={12}><path d="M.5.500h4l1.500 1 1.500-1h4v9h-4L6 11 4.500 9.500h-4zM6 2v9M2 3.500h2M2 5.500h2M2 7.500h2M8 3.500h2M8 5.500h2M8 7.500h2" fill="#fff" stroke="#555" /></Svg></Cell>
        <Cell><Svg w={13} h={12}><path d="M.5.5h9v9h-9z" fill="#fff" stroke="#666" /><path d="M2 2.500h6M2 4.500h6M2 6.500h5" stroke="#666" /><circle cx="9.500" cy="8.500" r="3.300" fill="#3d7fa9" /><path d="M8 7l3 0-1 3z" fill="#66a15c" /></Svg></Cell>
        <Cell><Svg w={11} h={11}><path d="M0 1.500h5M2 3.500h7M4 5.500h6M4 7.500h5M2 9.500h8" stroke="#6f7785" strokeDasharray="3 1" /></Svg></Cell>
        <Cell><Svg w={11} h={11}><path d="M0 1.500h11M0 3.500h11M0 5.500h11M0 7.500h11M0 9.500h11" stroke="#6f7785" /></Svg></Cell>
      </div>
      <span className="w-[44px] pl-[9px] tracking-[-0.2px]">100%</span>
      <Zoomer />
      <Svg w={101} h={16}><path d="M1 7.500h99" stroke="#4c70a3" /><path d="M1 8.500h99" stroke="#c3d6f0" /><path d="M46.500 2.500h8v7l-4 4-4-4z" fill="#e9f0f9" stroke="#526a93" strokeWidth="1.300" /><path d="M50.500 5v4" stroke="#526a93" /></Svg>
      <Zoomer plus />
    </div>
  </footer>
);

export default function App() {
  return (
    <div className="relative flex h-[728px] w-[1366px] flex-col overflow-hidden bg-[#9cbae3] font-['Open_Sans','Noto_Sans',sans-serif]">
      <TitleBar />
      <nav className="flex h-[23px] shrink-0 bg-[#bfdbff] text-[11px] text-[#15428b]">
        <div className="ml-12 flex h-[24px] w-[52px] items-center justify-center rounded-t-[4px] border border-b-0 border-[#9fd1ee] bg-[#e8f1fb] pt-0.5">Inicio</div>
        <div className="w-[5px]" />
        {tabs.map(([t, w]) => <div key={t} className={`flex items-center justify-center whitespace-nowrap pt-[3px] ${w}`}>{t}</div>)}
        <div className="ml-auto flex items-center pr-1"><Svg w={14} h={14}><circle cx="7" cy="7" r="6.300" fill="#2d62c6" stroke="#d9e6fb" /><circle cx="7" cy="7" r="6.800" fill="none" stroke="#5579af" strokeWidth=".5" /><text x="7" y="11" fontSize="10.500" fontWeight="bold" fill="#fff" textAnchor="middle">?</text></Svg></div>
      </nav>
      <div className="h-[93px] shrink-0 bg-[#b8d0ef] pl-0.5 pr-0.5"><Ribbon /></div>
      <main className="flex h-[564px] shrink-0">
        <div className="flex w-[1349px] flex-col">
          <div className="flex h-6 bg-[#9cbae3]">
            <div className="flex w-[25px] items-center justify-center border border-[#4b78c5] bg-[#b0c8eb]"><div className="flex h-[15px] w-[15px] items-center justify-center border border-[#4b78c5] bg-linear-to-b from-[#b9cce8] to-white"><Svg w={6} h={6}><path d="M1 0v5h5" stroke="#24355d" strokeWidth="2" fill="none" /></Svg></div></div>
            <div className="w-[255px]" /><HRuler />
          </div>
          <div className="flex h-[540px]">
            <VRuler />
            <div className="flex flex-1 bg-linear-to-b from-[#9fbee8] from-0% via-[#577eb0] via-75% to-[#6692d0]">
              <div className="flex w-[265px] justify-end">
                <Svg w={265} h={540}>
                  <defs><linearGradient id="glow" x2="1" y2="0"><stop stopColor="#a9c5ec" /><stop offset="1" stopColor="#b5ceed" /></linearGradient><linearGradient id="edge"><stop stopColor="#365783" stopOpacity="0" /><stop offset="1" stopColor="#365783" stopOpacity=".4" /></linearGradient></defs>
                  <path d="M0 0h265v11Q120 45 0 93z" fill="url(#glow)" />
                  <path d="M0 93Q120 45 265 11Q115 45 0 116z" fill="#a8c4e9" opacity=".45" /><path d="M0 116Q115 45 265 11" stroke="#abc7ec" fill="none" opacity=".8" />
                  <rect x="260" width="5" height="540" fill="url(#edge)" />
                </Svg>
              </div>
              <article className="flex w-[795px] justify-start border-x border-[#53657f] bg-white pl-[110px] pt-[34px]"><EuropeMap /></article>
              <div className="w-2.5 bg-linear-to-r from-[#3c5675]/75 to-transparent" />
            </div>
          </div>
        </div>
        <aside className="flex w-[17px] flex-col items-start border-l border-[#b6cff0] bg-[#a5c3ef]">
          <div className="ml-[3px] mt-0.5 h-0.5 w-[9px] shrink-0 bg-[#3e4a62]" />
          <div className="mb-px mt-0.5 flex h-4 w-[15px] items-center justify-center border border-[#8897b2] bg-[#cfd3dd]"><Svg w={12} h={12}><path d="M1.500 2.500l2-1 1 1h6v6h-2v2l-2-2h-5z" fill="#f3eff3" stroke="#334461" /><path d="M4 2l-2 2M4 5l2-2M6 6h2v2" stroke="#334461" fill="none" /></Svg></div>
          <ScrollButton />
          <div className="flex w-[15px] flex-1 flex-col bg-linear-to-r from-[#7193c3] to-[#83a0c6] pt-[30px]">
            <div className="flex h-[53px] items-center justify-center rounded-[1px] border border-[#3c6bb1] bg-linear-to-r from-[#e8f2ff] via-[#b8d3fb] to-[#c8deff] shadow-[inset_0_0_0_1px_white]"><div className="h-[7px] w-2 bg-[repeating-linear-gradient(to_bottom,#7088aa_0_1px,transparent_1px_2px)]" /></div>
          </div>
          <ScrollButton down />
          <div className="flex h-[51px] w-[13px] flex-col items-center justify-around">
            <Svg w={7} h={7}><path d="M3.500 0L6 3H1zM3.500 3L6 5.500H1zM1 6.500h5" fill="#000" stroke="#000" strokeWidth=".5" /></Svg>
            <Svg w={8} h={8}><circle cx="4" cy="4" r="3" fill="#bbb" stroke="#222" /></Svg>
            <Svg w={7} h={7}><path d="M3.500 7L6 4H1zM3.500 4L6 1.500H1zM1 .5h5" fill="#000" stroke="#000" strokeWidth=".5" /></Svg>
          </div>
        </aside>
      </main>
      <StatusBar />

      <div className="absolute left-1 top-1 z-10"><Svg w={38} h={38}>
        <defs><radialGradient id="orb" cy=".35"><stop stopColor="#fff" /><stop offset=".6" stopColor="#dee3ea" /><stop offset="1" stopColor="#9faec5" /></radialGradient></defs>
        <circle cx="18.500" cy="18.500" r="17.500" fill="url(#orb)" stroke="#677e9d" />
        <path d="M7 8h12v7h-6v6H7z" fill="#dd5323" /><path d="M19 10h9v10h-5v-6h-4z" fill="#3277bd" /><path d="M9 18h6v6h5v5H9z" fill="#f6ba20" /><path d="M20 19h9v10h-9v-5z" fill="#66aa39" />
      </Svg></div>
      <KeyTip className="left-[14px] top-[13px]">A</KeyTip>
      <KeyTip className="left-[52px] top-[13px]">1</KeyTip>
      <KeyTip className="left-[79px] top-[13px]">2</KeyTip>
      <KeyTip className="left-[106px] top-[13px] opacity-45">3</KeyTip>
      <KeyTip className="left-[66px] top-[42px]">O</KeyTip>
      <KeyTip className="left-[129px] top-[42px]">B</KeyTip>
      <KeyTip className="left-[223px] top-[42px]">C</KeyTip>
      <KeyTip className="left-[327px] top-[42px]">S</KeyTip>
      <KeyTip className="left-[429px] top-[42px]">D</KeyTip>
      <KeyTip className="left-[520px] top-[42px]">R</KeyTip>
      <KeyTip className="left-[580px] top-[42px]">N</KeyTip>
      <div className="absolute left-[1312px] top-[334px] flex size-12 items-center justify-center rounded-full bg-[#007ee5] shadow-[0_3px_5px_rgba(40,110,190,.5)]">
        <Svg w={28} h={25}><path d="M8 0l6 4.500-7 4.500L1 5zM20 0l-6 4.500L21 9l6-4zM1 13.500L7 9l7 4.800L8 18zM27 13.500L21 9l-7 4.800L20 18zM8 19.500l6-4.700 6 4.700-6 4.500z" fill="#fff" /></Svg>
      </div>
    </div>
  );
}
